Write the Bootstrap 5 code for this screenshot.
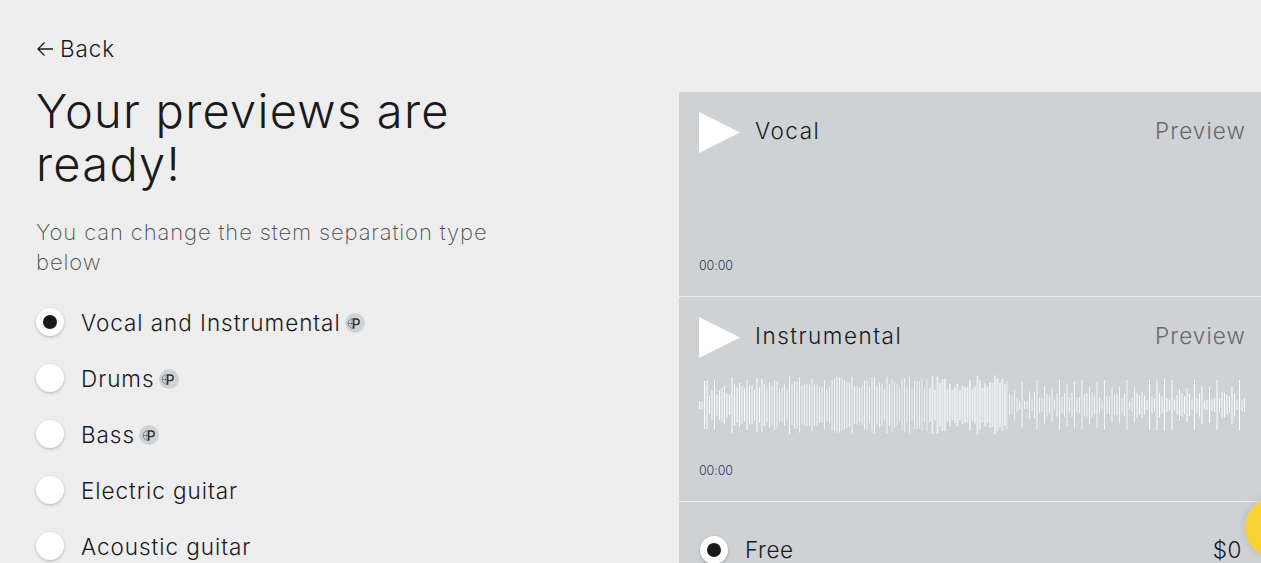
<!DOCTYPE html>
<html lang="en">
<head>
  <meta charset="UTF-8">
  <title>Your previews are ready</title>
  <link href="https://cdn.jsdelivr.net/npm/bootstrap@5.3.0/dist/css/bootstrap.min.css" rel="stylesheet">
  <style>
    html, body { height: 563px; overflow: hidden; }
    body { background: #eeeeee; color: #1a1a1c; font-family: Inter, "Liberation Sans", sans-serif; }
    .page-wrap { height: 563px; }
    .left-side { width: 679px; padding: 36px 0 0 36px; flex: none; }
    .right-side { flex: 1 1 auto; margin-top: 92px; background: #cfd2d5; }

    .back-link { color: #1a1a1c; font-size: 22.5px; line-height: 26px; text-decoration: none; letter-spacing: .9px; font-weight: 300; gap: 6px; }
    .main-title { font-size: 47px; line-height: 53px; font-weight: 300; letter-spacing: 1.25px; margin: 21px 0 0; width: 470px; }
    .sub-title { font-size: 22px; line-height: 30px; font-weight: 200; color: #4c4f52; letter-spacing: .88px; margin: 27px 0 0; width: 470px; }

    .stem-list { margin-top: 30px; gap: 26px; }
    .stem-row { height: 30px; gap: 17px; font-size: 22.5px; font-weight: 300; letter-spacing: .95px; }
    .stem-label { gap: 4px; padding-top: 2px; }
    .radio-dot { width: 28px; height: 28px; border-radius: 50%; background: #fff; box-shadow: 0 1px 3px rgba(0,0,0,.25); flex: none; }
    .radio-dot.is-on::after { content: ""; width: 14px; height: 14px; border-radius: 50%; background: #1a1a1c; }
    .pro-badge { width: 20px; height: 20px; border-radius: 50%; background: #d0d3d6; flex: none; }

    .track-row { height: 205px; border-bottom: 1px solid #eeeeee; padding: 20px 15px 0 20px; }
    .track-name { font-size: 22.5px; line-height: 36px; font-weight: 300; letter-spacing: 1.5px; margin: -4px 0 0 15px; }
    .track-preview { font-size: 22.5px; line-height: 36px; font-weight: 300; color: #66696c; letter-spacing: 1.1px; margin-top: -4px; }
    .wave-box { height: 62px; margin-top: 16px; }
    .wave-box svg { display: block; }
    .track-time { position: absolute; left: 20px; bottom: 22px; font-size: 12.5px; line-height: 16px; font-weight: 300; color: #23405c; letter-spacing: -.1px; }
    .plan-row { padding: 31px 19px 0 21px; font-size: 22.5px; font-weight: 300; letter-spacing: .6px; }
    .plan-row .radio-dot { margin-right: 17px; }
    .help-bubble { position: fixed; left: 1245px; top: 497px; width: 60px; height: 60px; border-radius: 50%; background: #fbd233; box-shadow: 0 0 8px rgba(0,0,0,.12); }
  </style>
</head>
<body>

  <div class="page-wrap d-flex">

    <!-- left side -->
    <div class="left-side">
      <a href="#" class="back-link d-inline-flex align-items-center">
        <svg width="18" height="16" viewBox="0 0 18 16" fill="none" stroke="#1a1a1c" stroke-width="1.3"><path d="M17 8H2M8.5 1.5 2 8l6.5 6.5"/></svg>
        Back
      </a>
      <h1 class="main-title">Your previews are ready!</h1>
      <p class="sub-title">You can change the stem separation type below</p>

      <div class="stem-list d-flex flex-column">
        <div class="stem-row d-flex align-items-center"><span class="radio-dot is-on d-flex align-items-center justify-content-center"></span><span class="stem-label d-flex align-items-center">Vocal and Instrumental<span class="pro-badge d-flex align-items-center justify-content-center" data-pro></span></span></div>
        <div class="stem-row d-flex align-items-center"><span class="radio-dot"></span><span class="stem-label d-flex align-items-center">Drums<span class="pro-badge d-flex align-items-center justify-content-center" data-pro></span></span></div>
        <div class="stem-row d-flex align-items-center"><span class="radio-dot"></span><span class="stem-label d-flex align-items-center">Bass<span class="pro-badge d-flex align-items-center justify-content-center" data-pro></span></span></div>
        <div class="stem-row d-flex align-items-center"><span class="radio-dot"></span><span class="stem-label d-flex align-items-center">Electric guitar</span></div>
        <div class="stem-row d-flex align-items-center"><span class="radio-dot"></span><span class="stem-label d-flex align-items-center">Acoustic guitar</span></div>
      </div>
    </div>

    <!-- right side -->
    <div class="right-side">
      <div class="track-row position-relative">
        <div class="d-flex align-items-center">
          <svg width="41" height="41" viewBox="0 0 41 41"><path d="M0 0 41 20.5 0 41z" fill="#fff"/></svg>
          <span class="track-name">Vocal</span>
          <span class="track-preview ms-auto">Preview</span>
        </div>
        <div class="track-time">00:00</div>
      </div>
      <div class="track-row position-relative">
        <div class="d-flex align-items-center">
          <svg width="41" height="41" viewBox="0 0 41 41"><path d="M0 0 41 20.5 0 41z" fill="#fff"/></svg>
          <span class="track-name">Instrumental</span>
          <span class="track-preview ms-auto">Preview</span>
        </div>
        <div class="wave-box" id="wave"></div>
        <div class="track-time">00:00</div>
      </div>
      <div class="plan-row d-flex align-items-center">
        <span class="radio-dot is-on d-flex align-items-center justify-content-center"></span>
        <span>Free</span>
        <span class="ms-auto">$0</span>
      </div>
    </div>
  </div>

  <div class="help-bubble"></div>

  <script src="https://cdn.jsdelivr.net/npm/bootstrap@5.3.0/dist/js/bootstrap.bundle.min.js"></script>
  <script>
    // small "P" coin in the badges
    const proIcon = '<svg width="15" height="15" viewBox="0 0 15 15" fill="none" stroke="#2b2e32"><path d="M6 2.6a4.9 4.9 0 0 0 0 9.8M1.2 7.5H6M6 2.8C4.4 4.5 4.4 10.5 6 12.2" stroke-width=".5"/><path d="M6.2 3h3.2a2.6 2.6 0 0 1 0 5.6H6.2M6.7 2.4v10.4" stroke-width="1.4"/></svg>';
    document.querySelectorAll('[data-pro]').forEach(el => { el.innerHTML = proIcon; });

    // waveform bars, loud in the middle and thinner at the ends
    const waveW = 546, waveH = 62, mid = 31;
    let seed = 17;
    const rnd = () => { seed = (seed * 9301 + 49297) % 233280; return seed / 233280; };
    let bars = '';
    for (let x = 0; x < waveW; x += 2.5) {
      const p = x / waveW;
      let amp;
      if (x < 4) amp = 4;
      else if (x < 32) amp = 8 + rnd() * 18;
      else if (p < 0.5) amp = 15 + rnd() * 14;
      else if (p < 0.56) amp = 17 + rnd() * 13;
      else amp = (Math.round(x / 2.5) % 3 === 0 ? 12 + rnd() * 14 : 4 + rnd() * 9);
      if (p > 0.58 && Math.round(x / 2.5) % 9 === 0) amp = 25;
      const op = p > 0.35 && p < 0.58 ? 0.6 : (p < 0.12 || p > 0.8 ? 0.95 : 0.75);
      const w = p > 0.42 && p < 0.56 ? 1.9 : 1;
      bars += `<rect x="${x}" y="${(mid - amp).toFixed(1)}" width="${w}" height="${(amp * 2).toFixed(1)}" fill="#fff" fill-opacity="${op}"/>`;
    }
    document.getElementById('wave').innerHTML = `<svg width="${waveW}" height="${waveH}" viewBox="0 0 ${waveW} ${waveH}">${bars}</svg>`;
  </script>
</body>
</html>
